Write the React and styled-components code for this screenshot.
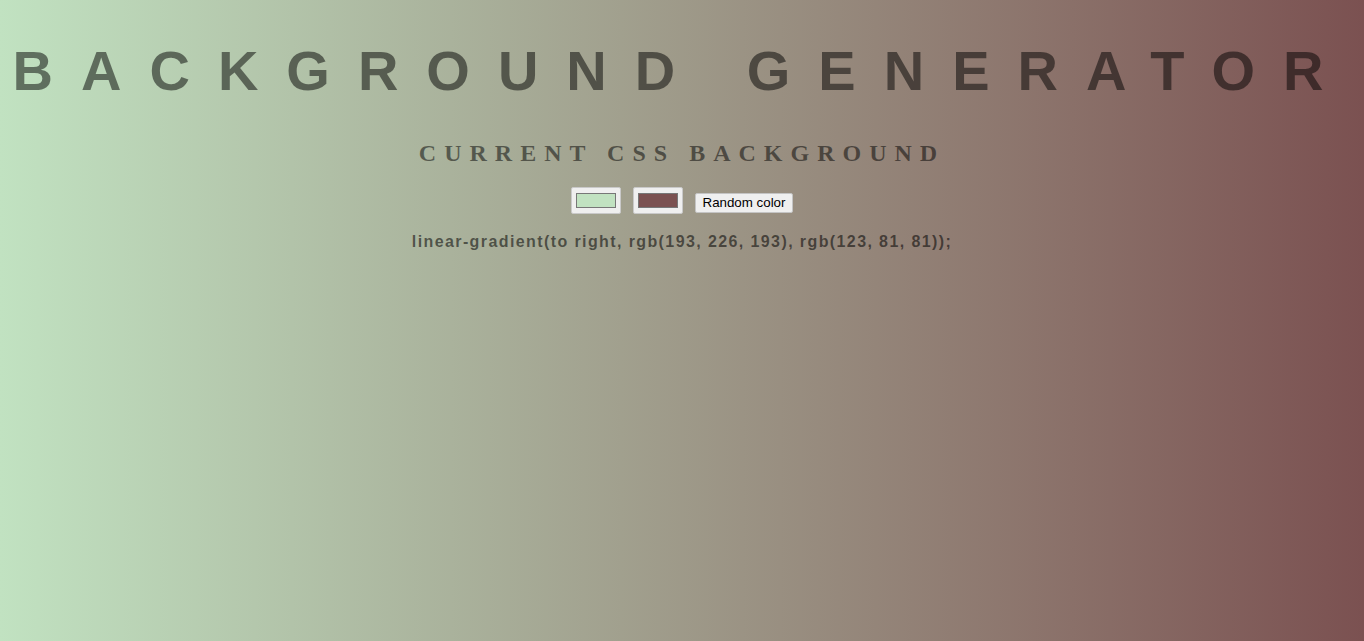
import React, { useState } from "react";
import styled, { createGlobalStyle } from "styled-components";

const GlobalStyle = createGlobalStyle`
  html {
    min-height: 100%;
  }
  body {
    margin: 0 8px 8px;
    min-height: 625px;
    font-family: "Liberation Serif", "Times New Roman", serif;
    font-size: 16px;
    color: rgba(0, 0, 0, 0.5);
    text-align: center;
    letter-spacing: 0.5em;
    background: linear-gradient(to right, rgb(193, 226, 193), rgb(123, 81, 81));
  }
`;

const Title = styled.h1`
  margin: 0.67em 0;
  font-family: "Liberation Sans", Arial, sans-serif;
  font-weight: 700;
  font-size: 3.5em;
  letter-spacing: 0.5em;
  color: rgba(0, 0, 0, 0.5);
  width: 100%;
`;

const Subtitle = styled.h2`
  margin: 0.83em 0;
  font-size: 1.5em;
  font-weight: 700;
  letter-spacing: 8px;
`;

const Controls = styled.div`
  display: flex;
  justify-content: center;
  align-items: flex-start;
  gap: 12px;
  height: 30px;
`;

const ColorInput = styled.input.attrs({ type: "color" })`
  box-sizing: border-box;
  width: 50px;
  height: 27px;
  margin: 0;
  padding: 1px 2px;
  border: 1px solid #c9c9c9;
  border-radius: 2px;
  background: #efefef;
  letter-spacing: normal;
  cursor: pointer;

  &::-webkit-color-swatch-wrapper {
    padding: 4px 2px;
  }
  &::-webkit-color-swatch {
    border: 1px solid #777777;
    border-radius: 0;
  }
`;

const RandomButton = styled.button`
  box-sizing: border-box;
  margin: 6px 0 0;
  height: 20px;
  padding: 0 7px;
  border: 1px solid #c4c4c4;
  border-radius: 2px;
  background: #efefef;
  color: #000;
  font-family: "Liberation Sans", Arial, sans-serif;
  font-size: 13.333px;
  letter-spacing: normal;
  line-height: 18px;
`;

const CssText = styled.h3`
  margin: 16px 0;
  font-family: "Liberation Sans", Arial, sans-serif;
  font-weight: 700;
  font-size: 16px;
  letter-spacing: 1.4px;
  color: rgba(0, 0, 0, 0.55);
`;

export default function App() {
  const [c1, setC1] = useState("#c1e2c1");
  const [c2, setC2] = useState("#7b5151");
  const toRgb = (hex) => {
    const n = parseInt(hex.slice(1), 16);
    return `rgb(${(n >> 16) & 255}, ${(n >> 8) & 255}, ${n & 255})`;
  };
  const randomHex = () =>
    "#" +
    Math.floor(Math.random() * 0xffffff)
      .toString(16)
      .padStart(6, "0");
  const css = `linear-gradient(to right, ${toRgb(c1)}, ${toRgb(c2)});`;
  return (
    <>
      <GlobalStyle />
      <Title>BACKGROUND GENERATOR</Title>
      <Subtitle>CURRENT CSS BACKGROUND</Subtitle>
      <Controls>
        <ColorInput value={c1} onChange={(e) => setC1(e.target.value)} />
        <ColorInput value={c2} onChange={(e) => setC2(e.target.value)} />
        <RandomButton
          onClick={() => {
            setC1(randomHex());
            setC2(randomHex());
          }}
        >
          Random color
        </RandomButton>
      </Controls>
      <CssText>{css}</CssText>
    </>
  );
}
